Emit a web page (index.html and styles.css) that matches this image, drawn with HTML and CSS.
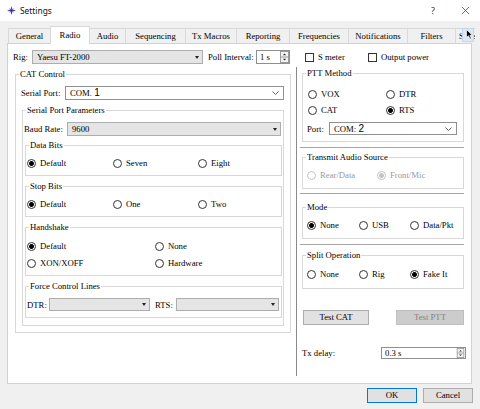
FILE: index.html
```html
<!DOCTYPE html>
<html>
<head>
<meta charset="utf-8">
<link rel="stylesheet" href="styles.css">
</head>
<body>
<div class="titlebar">
  <svg class="app-icon" viewBox="0 0 10 10" width="9" height="9">
    <path d="M5 0 L6 4 L10 5 L6 6 L5 10 L4 6 L0 5 L4 4 Z" fill="#3b3bb8"/>
    <path d="M2 2 L5 4.2 L8 2 L5.8 5 L8 8 L5 5.8 L2 8 L4.2 5 Z" fill="#7a7ae0"/>
    <circle cx="5" cy="5" r="1.2" fill="#2a2a90"/>
  </svg>
  <span class="title">Settings</span>
  <span class="tb-help">?</span>
  <svg class="tb-close" viewBox="0 0 10 10" width="9" height="9">
    <path d="M1 1 L9 9 M9 1 L1 9" stroke="#333" stroke-width="0.8" fill="none"/>
  </svg>
</div>

<div class="tabbar">
  <div class="tab t-general">General</div>
  <div class="tab active t-radio">Radio</div>
  <div class="tab t-audio">Audio</div>
  <div class="tab t-seq">Sequencing</div>
  <div class="tab t-tx">Tx Macros</div>
  <div class="tab t-rep">Reporting</div>
  <div class="tab t-freq">Frequencies</div>
  <div class="tab t-notif">Notifications</div>
  <div class="tab t-filt">Filters</div>
  <div class="tab t-sche">Sche</div>
  <div class="tab-scroll">
    <svg class="cursor" viewBox="0 0 7 11" width="7" height="11">
      <path d="M0.5 0.5 L0.5 8.5 L2.5 6.8 L4 10 L5.3 9.4 L3.9 6.3 L6.3 6.3 Z" fill="#000" stroke="#fff" stroke-width="0.7"/>
    </svg>
  </div>
</div>

<div class="pane">
  <div class="toprow">
    <span class="lbl lbl-rig">Rig:</span>
    <div class="combo gray w-rig"><span>Yaesu FT-2000</span><i class="tri"></i></div>
    <span class="lbl lbl-poll">Poll Interval:</span>
    <div class="spin w-poll"><span>1 s</span>
      <svg class="spin-btns" viewBox="0 0 9 12" width="9" height="12">
        <rect x="0.5" y="0.5" width="8" height="11" fill="#f4f4f4" stroke="#9a9a9a"/>
        <line x1="0.5" y1="6" x2="8.5" y2="6" stroke="#9a9a9a"/>
        <path d="M2.8 4.3 L4.5 2.5 L6.2 4.3 Z" fill="#333"/>
        <path d="M2.8 7.7 L4.5 9.5 L6.2 7.7 Z" fill="#333"/>
      </svg>
    </div>
    <span class="check ck-smeter"><i class="box"></i>S meter</span>
    <span class="check"><i class="box"></i>Output power</span>
  </div>

  <div class="columns">
    <div class="leftcol">
      <fieldset class="grp cat">
        <legend>CAT Control</legend>
        <div class="row serial">
          <span class="lbl w-serlbl">Serial Port:</span>
          <div class="combo white w-ser"><span>COM. <span class="dig">1</span></span>
            <svg class="chev" viewBox="0 0 7 4" width="7" height="4"><path d="M0.5 0.5 L3.5 3.5 L6.5 0.5" stroke="#555" fill="none" stroke-width="0.9"/></svg>
          </div>
        </div>
        <fieldset class="grp spp">
          <legend>Serial Port Parameters</legend>
          <div class="row baud">
            <span class="lbl w-baudlbl">Baud Rate:</span>
            <div class="combo gray w-baud"><span>9600</span><i class="tri"></i></div>
          </div>
          <fieldset class="grp sub first">
            <legend>Data Bits</legend>
            <div class="row radios">
              <span class="radio on w-86"><i class="dot"></i>Default</span>
              <span class="radio w-85"><i class="dot"></i>Seven</span>
              <span class="radio"><i class="dot"></i>Eight</span>
            </div>
          </fieldset>
          <fieldset class="grp sub">
            <legend>Stop Bits</legend>
            <div class="row radios">
              <span class="radio on w-86"><i class="dot"></i>Default</span>
              <span class="radio w-85"><i class="dot"></i>One</span>
              <span class="radio"><i class="dot"></i>Two</span>
            </div>
          </fieldset>
          <fieldset class="grp sub hand">
            <legend>Handshake</legend>
            <div class="row radios">
              <span class="radio on w-128"><i class="dot"></i>Default</span>
              <span class="radio"><i class="dot"></i>None</span>
            </div>
            <div class="row radios row2">
              <span class="radio w-128"><i class="dot"></i>XON/XOFF</span>
              <span class="radio"><i class="dot"></i>Hardware</span>
            </div>
          </fieldset>
          <fieldset class="grp sub force">
            <legend>Force Control Lines</legend>
            <div class="row lines">
              <span class="lbl w-dtrlbl">DTR:</span>
              <div class="combo gray w-dtr"><i class="tri"></i></div>
              <span class="lbl w-rtslbl">RTS:</span>
              <div class="combo gray w-rts"><i class="tri"></i></div>
            </div>
          </fieldset>
        </fieldset>
      </fieldset>
    </div>

    <div class="vline"></div>

    <div class="rightcol">
      <fieldset class="grp ptt">
        <legend>PTT Method</legend>
        <div class="row radios">
          <span class="radio w-78"><i class="dot"></i>VOX</span>
          <span class="radio"><i class="dot"></i>DTR</span>
        </div>
        <div class="row radios row2b">
          <span class="radio w-78"><i class="dot"></i>CAT</span>
          <span class="radio on"><i class="dot"></i>RTS</span>
        </div>
        <div class="row port">
          <span class="lbl w-portlbl">Port:</span>
          <div class="combo white w-port"><span>COM: <span class="dig">2</span></span>
            <svg class="chev" viewBox="0 0 7 4" width="7" height="4"><path d="M0.5 0.5 L3.5 3.5 L6.5 0.5" stroke="#555" fill="none" stroke-width="0.9"/></svg>
          </div>
        </div>
      </fieldset>
      <div class="sep s1"></div>
      <fieldset class="grp tas">
        <legend>Transmit Audio Source</legend>
        <div class="row radios">
          <span class="radio disabled w-70"><i class="dot"></i>Rear/Data</span>
          <span class="radio disabled on"><i class="dot"></i>Front/Mic</span>
        </div>
      </fieldset>
      <div class="sep s2"></div>
      <fieldset class="grp mode">
        <legend>Mode</legend>
        <div class="row radios">
          <span class="radio on w-52"><i class="dot"></i>None</span>
          <span class="radio w-51"><i class="dot"></i>USB</span>
          <span class="radio"><i class="dot"></i>Data/Pkt</span>
        </div>
      </fieldset>
      <div class="sep s3"></div>
      <fieldset class="grp split">
        <legend>Split Operation</legend>
        <div class="row radios">
          <span class="radio w-52"><i class="dot"></i>None</span>
          <span class="radio w-51"><i class="dot"></i>Rig</span>
          <span class="radio on"><i class="dot"></i>Fake It</span>
        </div>
      </fieldset>
      <div class="testrow">
        <div class="btn test-cat">Test CAT</div>
        <div class="btn disabled test-ptt">Test PTT</div>
      </div>
      <div class="delayrow">
        <span class="lbl w-delaylbl">Tx delay:</span>
        <div class="spin w-delay"><span>0.3 s</span>
          <svg class="spin-btns" viewBox="0 0 9 12" width="9" height="12">
            <rect x="0.5" y="0.5" width="8" height="11" fill="#f4f4f4" stroke="#9a9a9a"/>
            <line x1="0.5" y1="6" x2="8.5" y2="6" stroke="#9a9a9a"/>
            <path d="M2.8 4.3 L4.5 2.5 L6.2 4.3 Z" fill="#333"/>
            <path d="M2.8 7.7 L4.5 9.5 L6.2 7.7 Z" fill="#333"/>
          </svg>
        </div>
      </div>
    </div>
  </div>
</div>

<div class="dialog-buttons">
  <div class="btn ok">OK</div>
  <div class="btn cancel">Cancel</div>
</div>
</body>
</html>
```

FILE: styles.css
```css
* { box-sizing: border-box; }
html, body { margin: 0; padding: 0; }
body {
  width: 480px;
  height: 409px;
  overflow: hidden;
  background: #f0f0f0;
  font-family: "Liberation Serif", "Times New Roman", serif;
  font-size: 8.7px;
  line-height: 12px;
  color: #000;
}

/* title bar */
.titlebar {
  height: 21px;
  background: #fff;
  display: flex;
  align-items: center;
}
.app-icon { margin-left: 7px; }
.title {
  margin-left: 4px;
  font-family: "Noto Sans", "Open Sans", sans-serif;
  font-size: 8.4px;
  color: #111;
}
.tb-help {
  margin-left: auto;
  width: 10px;
  text-align: center;
  font-family: "Noto Sans", sans-serif;
  font-size: 9px;
  color: #333;
}
.tb-close { margin-left: 23px; margin-right: 10px; }

/* tabs */
.tabbar {
  position: relative;
  margin-top: 5px;
  width: 475px;
  height: 18px;
  padding-left: 8px;
  display: flex;
  align-items: flex-end;
  overflow: hidden;
}
.tab {
  flex: none;
  height: 15px;
  margin-bottom: 1px;
  margin-left: -1px;
  border: 1px solid #d9d9d9;
  border-bottom: none;
  background: #f0f0f0;
  text-align: center;
  line-height: 14px;
  white-space: nowrap;
}
.t-general { margin-left: 0; width: 43px; }
.tab.active {
  position: relative;
  z-index: 1;
  height: 18px;
  margin-bottom: 0;
  background: #fff;
  line-height: 16px;
}
.t-radio { width: 40px; }
.t-audio { width: 37px; }
.t-seq { width: 61px; }
.t-tx { width: 52px; }
.t-rep { width: 54px; }
.t-freq { width: 60px; }
.t-notif { width: 60px; }
.t-filt { width: 49px; }
.t-sche { width: 30px; text-align: left; padding-left: 3px; }
.tab-scroll {
  position: absolute;
  left: 462px;
  top: 2px;
  width: 12px;
  height: 14px;
  background: #dce8f4;
  border: 1px solid #c3d6ea;
}
.tab-scroll .cursor { position: absolute; left: 3px; top: 0px; }

/* pane */
.pane {
  margin-left: 7px;
  margin-top: -1px;
  width: 465px;
  height: 341px;
  border: 1px solid #d2d2d2;
  background: #fff;
}

.lbl { white-space: nowrap; flex: none; }
.row { display: flex; align-items: center; height: 12px; }

.toprow {
  margin-top: 6px;
  height: 14px;
  padding-left: 5px;
  display: flex;
  align-items: center;
}
.lbl-rig { width: 19px; }
.w-rig { width: 171px; }
.lbl-poll { margin-left: 5px; width: 48px; }
.w-poll { width: 34px; }
.ck-smeter { margin-left: 15px; width: 63px; }

/* combos */
.combo {
  flex: none;
  height: 14px;
  border: 1px solid #adadad;
  display: flex;
  align-items: center;
  padding-left: 4px;
  white-space: nowrap;
}
.combo.gray { background: #e5e5e5; }
.combo.white { background: #fff; border-color: #8f8f8f; }
.tri {
  margin-left: auto;
  margin-right: 3px;
  width: 0;
  height: 0;
  border-left: 2.5px solid transparent;
  border-right: 2.5px solid transparent;
  border-top: 3px solid #222;
}
.chev { margin-left: auto; margin-right: 4px; }
.dig {
  font-family: "Liberation Sans", Arial, sans-serif;
  font-size: 10px;
}

/* spin boxes */
.spin {
  flex: none;
  height: 14px;
  border: 1px solid #8f8f8f;
  background: #fff;
  display: flex;
  align-items: center;
  padding-left: 3px;
}
.spin-btns { margin-left: auto; }

/* checkboxes */
.check { display: inline-flex; align-items: center; white-space: nowrap; flex: none; }
.check .box {
  width: 9px;
  height: 9px;
  border: 1px solid #333;
  background: #fff;
  margin-right: 4px;
}

/* radios */
.radio { display: inline-flex; align-items: center; white-space: nowrap; flex: none; }
.radio .dot {
  width: 9px;
  height: 9px;
  border: 1px solid #333;
  border-radius: 50%;
  background: #fff;
  margin-right: 4px;
  flex: none;
}
.radio.on .dot { background: radial-gradient(circle, #000 0 2.1px, #fff 2.7px); }
.radio.disabled { color: #9a9a9a; }
.radio.disabled .dot { border-color: #c4c4c4; }
.radio.disabled.on .dot { background: radial-gradient(circle, #c4c4c4 0 2.1px, #fff 2.7px); }
.w-86 { width: 86px; }
.w-85 { width: 85px; }
.w-128 { width: 128px; }
.w-78 { width: 78px; }
.w-70 { width: 70px; }
.w-52 { width: 52px; }
.w-51 { width: 51px; }

/* group boxes */
.grp {
  margin: 0;
  padding: 0;
  min-width: 0;
  border: 1px solid #d8d8d8;
}
.grp > legend {
  padding: 0 1px;
  margin-left: 3px;
  height: 12px;
  line-height: 12px;
  white-space: nowrap;
}

/* columns */
.columns {
  margin-top: 3px;
  display: flex;
  align-items: flex-start;
}
.leftcol { margin-top: 1px; margin-left: 7px; }
.vline {
  flex: none;
  margin-left: 5px;
  width: 1px;
  height: 309px;
  background: #8a8a8a;
}
.rightcol { margin-left: 3px; width: 168px; }

/* left column groups */
.cat { width: 276px; padding: 6px 0 6px 0; }
.serial { margin: 0 5px; height: 14px; }
.w-serlbl { width: 44px; }
.w-ser { width: 219px; }

.spp { margin: 4px 0 0 6px; width: 262px; padding: 6px 0 7px 0; }
.baud { margin-left: 1px; height: 14px; }
.w-baudlbl { width: 43px; }
.w-baud { width: 214px; }

.sub { margin: 4px 0 0 2px; width: 257px; padding: 6px 0 6px 0; }
.sub.first { margin-top: 3px; }
.sub .radios { margin-left: 1px; }
.hand { padding-top: 7px; }
.row2 { margin-top: 5px; }
.force .lines { margin-left: 1px; height: 13px; }
.w-dtrlbl { width: 22px; }
.w-dtr { width: 101px; height: 13px; }
.w-rtslbl { margin-left: 5px; width: 21px; }
.w-rts { width: 103px; height: 13px; }

/* right column groups */
.ptt { margin-left: 2px; width: 162px; padding: 9px 0 6px 0; }
.ptt .radios { margin-left: 5px; }
.row2b { margin-top: 4px; }
.port { margin: 6px 0 0 4px; height: 13px; }
.w-portlbl { width: 22px; }
.w-port { width: 128px; height: 13px; }

.sep { width: 164px; border-top: 1px solid #a6a6a6; height: 1px; }
.s1 { margin-top: 5px; }
.s2 { margin-top: 4px; }
.s3 { margin-top: 5px; }

.tas { margin: 3px 0 0 2px; width: 162px; padding: 6px 0 7px 0; }
.mode { margin: 7px 0 0 2px; width: 162px; padding: 6px 0 7px 0; }
.split { margin: 4px 0 0 2px; width: 162px; padding: 7px 0 8px 0; }
.tas .radios, .mode .radios, .split .radios { margin-left: 4px; }

/* buttons */
.btn {
  flex: none;
  height: 15px;
  border: 1px solid #adadad;
  background: #e1e1e1;
  text-align: center;
  line-height: 13px;
  white-space: nowrap;
}
.btn.disabled { background: #cccccc; border-color: #bfbfbf; color: #838383; }
.testrow { display: flex; margin-top: 21px; }
.test-cat { margin-left: 3px; width: 66px; }
.test-ptt { margin-left: 27px; width: 68px; }

.delayrow { display: flex; align-items: center; margin-top: 22px; height: 12px; }
.w-delaylbl { margin-left: 2px; width: 79px; }
.w-delay { width: 85px; height: 12px; }
.w-delay .spin-btns { height: 10px; }

.dialog-buttons {
  display: flex;
  justify-content: flex-end;
  margin-top: 4px;
  padding-right: 7px;
}
.ok { width: 50px; border-color: #0078d7; }
.cancel { margin-left: 6px; width: 50px; }
```
